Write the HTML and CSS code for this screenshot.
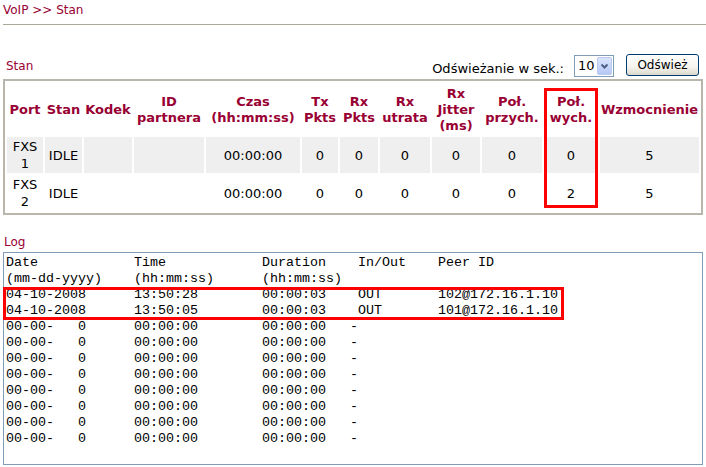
FILE: index.html
```html
<!DOCTYPE html>
<html lang="pl">
<head>
<meta charset="utf-8">
<title>VoIP &gt;&gt; Stan</title>
<link rel="stylesheet" href="styles.css">
</head>
<body>
<div class="page">
  <div class="title">VoIP &gt;&gt; Stan</div>
  <div class="rule"></div>
  <div class="head">
    <div class="label stan-label">Stan</div>
    <div class="refresh">
      <span class="refresh-text">Odświeżanie w sek.:</span>
      <div class="select">
        <span class="select-value">10</span>
        <span class="select-btn"><svg width="13" height="16" viewBox="0 0 13 16"><path d="M3.5 6.5 L6.5 9.5 L9.5 6.5" fill="none" stroke="#4d6185" stroke-width="2"/></svg></span>
      </div>
      <div class="button">Odśwież</div>
    </div>
  </div>
  <div class="box">
    <table class="status">
      <colgroup>
        <col class="c36"><col class="c37"><col class="c48"><col class="c70"><col class="c94"><col class="c36"><col class="c38"><col class="c50"><col class="c48"><col class="c60"><col class="c54"><col class="c99">
      </colgroup>
      <thead>
        <tr>
          <th>Port</th><th>Stan</th><th>Kodek</th><th>ID<br>partnera</th><th>Czas<br>(hh:mm:ss)</th><th>Tx<br>Pkts</th><th>Rx<br>Pkts</th><th>Rx<br>utrata</th><th>Rx<br>Jitter<br>(ms)</th><th>Poł.<br>przych.</th><th>Poł.<br>wych.</th><th>Wzmocnienie</th>
        </tr>
      </thead>
      <tbody>
        <tr class="odd">
          <td>FXS<br>1</td><td>IDLE</td><td></td><td></td><td>00:00:00</td><td>0</td><td>0</td><td>0</td><td>0</td><td>0</td><td>0</td><td>5</td>
        </tr>
        <tr>
          <td>FXS<br>2</td><td>IDLE</td><td></td><td></td><td>00:00:00</td><td>0</td><td>0</td><td>0</td><td>0</td><td>0</td><td>2</td><td>5</td>
        </tr>
      </tbody>
    </table>
    <div class="mark mark-col"></div>
  </div>
  <div class="label log-label">Log</div>
  <div class="log">
<pre>Date            Time            Duration    In/Out    Peer ID
(mm-dd-yyyy)    (hh:mm:ss)      (hh:mm:ss)
04-10-2008      13:50:28        00:00:03    OUT       102@172.16.1.10
04-10-2008      13:50:05        00:00:03    OUT       101@172.16.1.10
00-00-   0      00:00:00        00:00:00   -
00-00-   0      00:00:00        00:00:00   -
00-00-   0      00:00:00        00:00:00   -
00-00-   0      00:00:00        00:00:00   -
00-00-   0      00:00:00        00:00:00   -
00-00-   0      00:00:00        00:00:00   -
00-00-   0      00:00:00        00:00:00   -
00-00-   0      00:00:00        00:00:00   -</pre>
    <div class="mark mark-rows"></div>
  </div>
</div>
</body>
</html>
```
FILE: styles.css
```css
body {
  margin: 0;
  background: #ffffff;
  font-family: "DejaVu Sans", Verdana, sans-serif;
  font-size: 12px;
  color: #000000;
}

.page {
  padding: 2px 0 0 3px;
}

.title {
  color: #990033;
  line-height: 16px;
}

.rule {
  margin-top: 6px;
  height: 1px;
  background: #aca899;
}

.head {
  height: 54px;
  box-sizing: border-box;
  display: flex;
  justify-content: space-between;
  align-items: flex-end;
  padding-bottom: 2px;
}

.label {
  color: #990033;
  line-height: 16px;
}

.stan-label {
  padding-left: 3px;
  margin-bottom: 3px;
}

.refresh {
  display: flex;
  align-items: flex-end;
  margin-right: 7px;
}

.refresh-text {
  font-size: 13px;
  line-height: 16px;
  margin-right: 10px;
}

.select {
  width: 40px;
  height: 22px;
  box-sizing: border-box;
  border: 1px solid #7f9db9;
  background: #ffffff;
  display: flex;
  align-items: stretch;
}

.select-value {
  flex: 1;
  padding-left: 3px;
  line-height: 20px;
  font-size: 13px;
}

.select-btn {
  width: 15px;
  margin: 1px;
  box-sizing: border-box;
  border: 1px solid #b9c9ef;
  border-radius: 2px;
  background: linear-gradient(#dbe5fd, #b6c8f6);
  display: flex;
  align-items: center;
  justify-content: center;
}

.button {
  margin-left: 12px;
  margin-bottom: 1px;
  width: 73px;
  height: 22px;
  box-sizing: border-box;
  border: 1px solid #003c74;
  border-radius: 3px;
  background: linear-gradient(#ffffff 0%, #f5f4ee 60%, #dcd8cc 100%);
  text-align: center;
  line-height: 20px;
}

.box {
  position: relative;
  width: 700px;
  box-sizing: border-box;
  border: 2px solid #b9b7ab;
  padding-top: 1px;
}

.status {
  width: 696px;
  table-layout: fixed;
  border-collapse: separate;
  border-spacing: 2px;
  font-size: 13px;
}

.c36 { width: 36px; }
.c37 { width: 37px; }
.c38 { width: 38px; }
.c48 { width: 48px; }
.c50 { width: 50px; }
.c54 { width: 54px; }
.c60 { width: 60px; }
.c70 { width: 70px; }
.c94 { width: 94px; }
.c99 { width: 99px; }

.status th {
  color: #990033;
  font-weight: bold;
  line-height: 16px;
  padding: 0;
  height: 51px;
  text-align: center;
  vertical-align: middle;
  white-space: nowrap;
}

.status td {
  line-height: 17px;
  padding: 0;
  height: 36px;
  text-align: center;
  vertical-align: middle;
}

.status tr.odd td {
  background: #efefef;
}

.mark {
  position: absolute;
  box-sizing: border-box;
  border: 3px solid #ff0000;
}

.mark-col {
  left: 539px;
  top: 7px;
  width: 54px;
  height: 120px;
}

.log-label {
  margin-top: 19px;
  padding-left: 1px;
}

.log {
  position: relative;
  margin-top: 2px;
  width: 700px;
  height: 213px;
  box-sizing: border-box;
  border: 1px solid #7f9db9;
  padding: 2px;
}

.log pre {
  margin: 0;
  font-family: "Liberation Mono", "Courier New", monospace;
  font-size: 13.333px;
  line-height: 16px;
  color: #000000;
}

.mark-rows {
  left: -1px;
  top: 34px;
  width: 561px;
  height: 33px;
}
```
